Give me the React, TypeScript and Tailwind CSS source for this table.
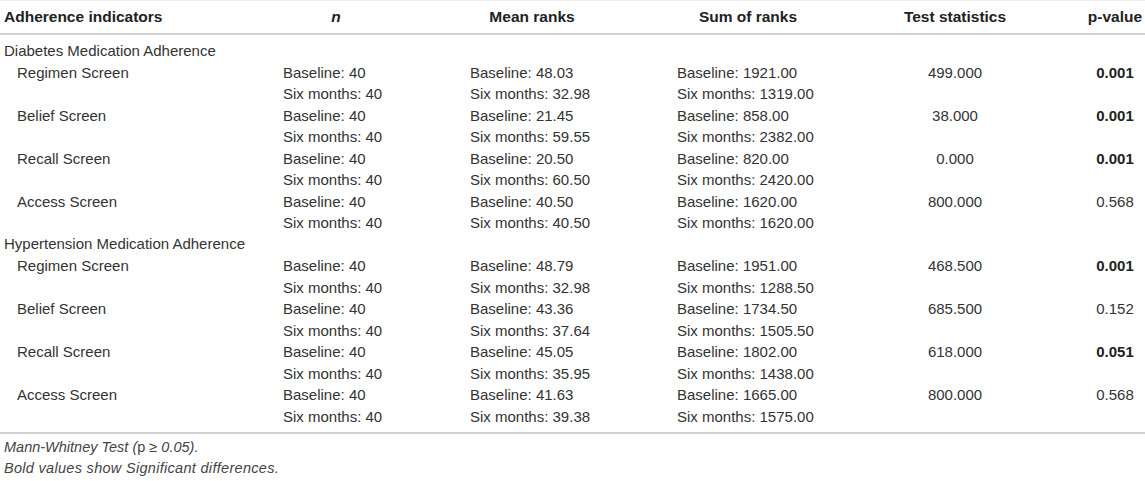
type Row = {
  label: string;
  n: [string, string];
  mean: [string, string];
  sum: [string, string];
  stat: string;
  p: string;
  bold?: boolean;
};

const diabetes: Row[] = [
  { label: 'Regimen Screen', n: ['40', '40'], mean: ['48.03', '32.98'], sum: ['1921.00', '1319.00'], stat: '499.000', p: '0.001', bold: true },
  { label: 'Belief Screen', n: ['40', '40'], mean: ['21.45', '59.55'], sum: ['858.00', '2382.00'], stat: '38.000', p: '0.001', bold: true },
  { label: 'Recall Screen', n: ['40', '40'], mean: ['20.50', '60.50'], sum: ['820.00', '2420.00'], stat: '0.000', p: '0.001', bold: true },
  { label: 'Access Screen', n: ['40', '40'], mean: ['40.50', '40.50'], sum: ['1620.00', '1620.00'], stat: '800.000', p: '0.568' },
];

const hypertension: Row[] = [
  { label: 'Regimen Screen', n: ['40', '40'], mean: ['48.79', '32.98'], sum: ['1951.00', '1288.50'], stat: '468.500', p: '0.001', bold: true },
  { label: 'Belief Screen', n: ['40', '40'], mean: ['43.36', '37.64'], sum: ['1734.50', '1505.50'], stat: '685.500', p: '0.152' },
  { label: 'Recall Screen', n: ['40', '40'], mean: ['45.05', '35.95'], sum: ['1802.00', '1438.00'], stat: '618.000', p: '0.051', bold: true },
  { label: 'Access Screen', n: ['40', '40'], mean: ['41.63', '39.38'], sum: ['1665.00', '1575.00'], stat: '800.000', p: '0.568' },
];

const grid = 'grid grid-cols-[283px_187px_207px_148px_260px_60px]';

function DataRows({ row }: { row: Row }) {
  return (
    <>
      <div className={`${grid} h-[21.5px] items-center`}>
        <div className="pl-[17px]">{row.label}</div>
        <div>Baseline: {row.n[0]}</div>
        <div>Baseline: {row.mean[0]}</div>
        <div className="whitespace-nowrap">Baseline: {row.sum[0]}</div>
        <div className="text-center">{row.stat}</div>
        <div className={`text-center ${row.bold ? 'font-bold text-[#222]' : ''}`}>{row.p}</div>
      </div>
      <div className={`${grid} h-[21.5px] items-center`}>
        <div />
        <div>Six months: {row.n[1]}</div>
        <div>Six months: {row.mean[1]}</div>
        <div className="whitespace-nowrap">Six months: {row.sum[1]}</div>
        <div />
        <div />
      </div>
    </>
  );
}

function Group({ title, rows }: { title: string; rows: Row[] }) {
  return (
    <div>
      <div className="h-[21.5px] flex items-center pl-1">{title}</div>
      {rows.map((r) => (
        <DataRows key={title + r.label} row={r} />
      ))}
    </div>
  );
}

export default function App() {
  return (
    <div className="w-[1145px] h-[481px] bg-white text-[15px] text-[#333] font-['Liberation_Sans',Arial,sans-serif] overflow-hidden">
      {/* Header */}
      <div className={`${grid} h-[35px] items-center border-t border-[#ececec] border-b-2 border-b-[#d2d2d2] text-[15.5px] font-bold text-[#222]`}>
        <div className="pl-1">Adherence indicators</div>
        <div className="w-[106px] text-center italic">n</div>
        <div className="w-[124px] text-center">Mean ranks</div>
        <div className="w-[142px] text-center whitespace-nowrap">Sum of ranks</div>
        <div className="text-center">Test statistics</div>
        <div className="text-center whitespace-nowrap">p-value</div>
      </div>

      {/* Body */}
      <div className="pt-[5px] pb-[5px] border-b-2 border-[#d2d2d2]">
        <Group title="Diabetes Medication Adherence" rows={diabetes} />
        <Group title="Hypertension Medication Adherence" rows={hypertension} />
      </div>

      {/* Footnotes */}
      <div className="pl-1 pt-[3px] text-[14.5px] text-[#444] italic leading-[21px]">
        <p>
          Mann-Whitney Test (<span className="not-italic">p</span> ≥ 0.05).
        </p>
        <p className="tracking-[0.3px]">Bold values show Significant differences.</p>
      </div>
    </div>
  );
}
